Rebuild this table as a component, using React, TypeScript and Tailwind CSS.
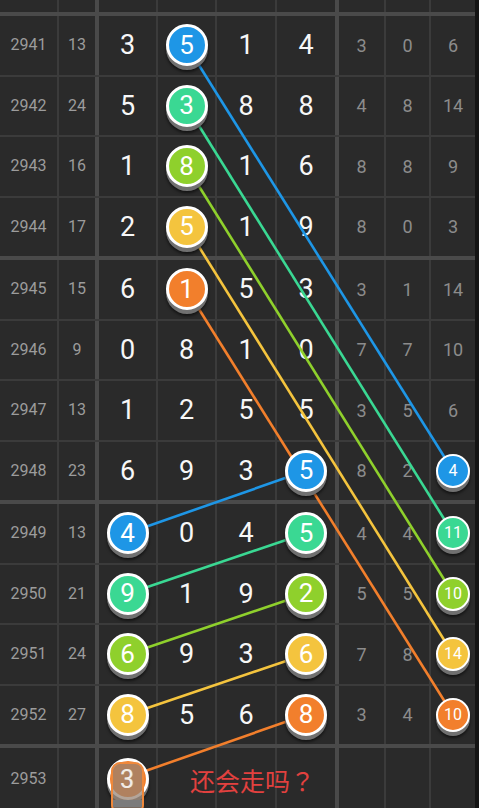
import type { ReactNode } from "react";

type Color = "blue" | "green" | "lime" | "yellow" | "orange";
type Val = number | { n: number; c: Color } | null;

const BALL_BG: Record<Color, string> = {
  blue: "bg-[#1e96e6]",
  green: "bg-[#3ad893]",
  lime: "bg-[#8fd02c]",
  yellow: "bg-[#f4c43e]",
  orange: "bg-[#f27f2c]",
};

const LINE: Record<Color, string> = {
  blue: "#1e96e6",
  green: "#3ad893",
  lime: "#8fd02c",
  yellow: "#f4c43e",
  orange: "#f27f2c",
};

const ROWS: { issue: number; sum: number | null; main: Val[]; skip: Val[] }[] = [
  { issue: 2941, sum: 13, main: [3, { n: 5, c: "blue" }, 1, 4], skip: [3, 0, 6] },
  { issue: 2942, sum: 24, main: [5, { n: 3, c: "green" }, 8, 8], skip: [4, 8, 14] },
  { issue: 2943, sum: 16, main: [1, { n: 8, c: "lime" }, 1, 6], skip: [8, 8, 9] },
  { issue: 2944, sum: 17, main: [2, { n: 5, c: "yellow" }, 1, 9], skip: [8, 0, 3] },
  { issue: 2945, sum: 15, main: [6, { n: 1, c: "orange" }, 5, 3], skip: [3, 1, 14] },
  { issue: 2946, sum: 9, main: [0, 8, 1, 0], skip: [7, 7, 10] },
  { issue: 2947, sum: 13, main: [1, 2, 5, 5], skip: [3, 5, 6] },
  { issue: 2948, sum: 23, main: [6, 9, 3, { n: 5, c: "blue" }], skip: [8, 2, { n: 4, c: "blue" }] },
  { issue: 2949, sum: 13, main: [{ n: 4, c: "blue" }, 0, 4, { n: 5, c: "green" }], skip: [4, 4, { n: 11, c: "green" }] },
  { issue: 2950, sum: 21, main: [{ n: 9, c: "green" }, 1, 9, { n: 2, c: "lime" }], skip: [5, 5, { n: 10, c: "lime" }] },
  { issue: 2951, sum: 24, main: [{ n: 6, c: "lime" }, 9, 3, { n: 6, c: "yellow" }], skip: [7, 8, { n: 14, c: "yellow" }] },
  { issue: 2952, sum: 27, main: [{ n: 8, c: "yellow" }, 5, 6, { n: 8, c: "orange" }], skip: [3, 4, { n: 10, c: "orange" }] },
];

// geometry shared with the svg overlay
const MAIN_X = [127.5, 186.5, 246, 306];
const SKIP_X = 453;
const rowY = (i: number) => 16 + Math.floor(i / 4) * 244 + (i % 4) * 60.5 + 29.25;

const SEGMENTS: { c: Color; from: [number, number]; to: [number, number] }[] = [
  { c: "blue", from: [MAIN_X[1], rowY(0)], to: [SKIP_X, rowY(7)] },
  { c: "green", from: [MAIN_X[1], rowY(1)], to: [SKIP_X, rowY(8)] },
  { c: "lime", from: [MAIN_X[1], rowY(2)], to: [SKIP_X, rowY(9)] },
  { c: "yellow", from: [MAIN_X[1], rowY(3)], to: [SKIP_X, rowY(10)] },
  { c: "orange", from: [MAIN_X[1], rowY(4)], to: [SKIP_X, rowY(11)] },
  { c: "blue", from: [MAIN_X[3], rowY(7)], to: [MAIN_X[0], rowY(8)] },
  { c: "green", from: [MAIN_X[3], rowY(8)], to: [MAIN_X[0], rowY(9)] },
  { c: "lime", from: [MAIN_X[3], rowY(9)], to: [MAIN_X[0], rowY(10)] },
  { c: "yellow", from: [MAIN_X[3], rowY(10)], to: [MAIN_X[0], rowY(11)] },
  { c: "orange", from: [MAIN_X[3], rowY(11)], to: [MAIN_X[0], rowY(12)] },
];

function Ball({ n, c, small }: { n: number; c: Color; small?: boolean }) {
  return (
    <div
      className={`relative z-20 flex items-center justify-center rounded-full border-white text-white shadow-[0_4px_0_#707070,0_6px_3px_rgba(0,0,0,0.55)] ${BALL_BG[c]} ${
        small ? "w-[34px] h-[34px] border-[2.5px] text-[16px]" : "w-[42px] h-[42px] border-[3px] text-[26px]"
      }`}
    >
      {n}
    </div>
  );
}

function Cell({ w, children, className = "" }: { w: string; children?: ReactNode; className?: string }) {
  return <div className={`${w} shrink-0 flex items-center justify-center ${className}`}>{children}</div>;
}

const Thin = () => <div className="w-[2px] shrink-0 bg-[#3b3b3b]" />;
const Thick = () => <div className="w-[4px] shrink-0 bg-[#4a4a4a]" />;

const MAIN_W = ["w-[57px]", "w-[57px]", "w-[58px]", "w-[58px]"];
const SKIP_W = ["w-[45px]", "w-[43px]", "w-[44px]"];

function GridRow({
  h,
  issue,
  sum,
  main,
  skip,
  mainSlot,
}: {
  h: string;
  issue?: ReactNode;
  sum?: ReactNode;
  main: ReactNode[];
  skip: ReactNode[];
  mainSlot?: boolean;
}) {
  return (
    <div className={`flex ${h}`}>
      <Cell w="w-[57px]" className="text-[16px] text-[#9c9c9c]">
        {issue}
      </Cell>
      <Thin />
      <Cell w="w-[36px]" className="text-[16px] text-[#9c9c9c]">
        {sum}
      </Cell>
      <Thick />
      {main.map((m, i) => (
        <div key={i} className="flex">
          {i > 0 && <Thin />}
          <Cell w={MAIN_W[i]} className={`text-[27px] text-[#f7f7f7] ${mainSlot && i === 1 ? "justify-start" : ""}`}>
            {m}
          </Cell>
        </div>
      ))}
      <Thick />
      {skip.map((s, i) => (
        <div key={i} className="flex">
          {i > 0 && <Thin />}
          <Cell w={SKIP_W[i]} className="text-[18px] text-[#8c8c8c]">
            {s}
          </Cell>
        </div>
      ))}
    </div>
  );
}

function renderVal(v: Val, small?: boolean) {
  if (v === null) return null;
  if (typeof v === "number") return v;
  return <Ball n={v.n} c={v.c} small={small} />;
}

export default function App() {
  return (
    <div className="w-[479px] h-[808px] overflow-hidden bg-[#141414] font-['Roboto','Noto_Sans_CJK_SC',sans-serif]">
      <div className="relative w-[475px] bg-[#2a2a2a]">
        <GridRow h="h-[12px]" main={[null, null, null, null]} skip={[null, null, null]} />
        <div className="h-[4px] bg-[#4a4a4a]" />
        {ROWS.map((r, i) => (
          <div key={r.issue}>
            <GridRow
              h="h-[58.5px]"
              issue={r.issue}
              sum={r.sum}
              main={r.main.map((v) => renderVal(v))}
              skip={r.skip.map((v) => renderVal(v, true))}
            />
            <div className={i % 4 === 3 ? "h-[4px] bg-[#4a4a4a]" : "h-[2px] bg-[#3b3b3b]"} />
          </div>
        ))}
        <GridRow
          h="h-[62px]"
          issue={2953}
          mainSlot
          main={[
            <div key="b" className="relative">
              <Ball n={3} c="orange" />
              <div className="absolute z-30 left-[4px] top-[4px] w-[33px] h-[52px] rounded-[9px] border-2 border-[#f0883a] bg-[rgba(150,130,115,0.72)] flex flex-col items-center overflow-hidden">
                <span className="text-[25px] leading-[31px] text-[#f3ece6]">3</span>
                <div className="mt-[5px] w-full h-[7px] bg-[#7b7b7b]" />
              </div>
            </div>,
            <span
              key="t"
              className="relative z-20 whitespace-nowrap pl-[32px] pt-[4px] text-[25px] text-[#e2413f] font-['Noto_Sans_CJK_SC',sans-serif]"
            >
              还会走吗<span className="font-['Noto_Sans_CJK_TC',sans-serif]">？</span>
            </span>,
            null,
            null,
          ]}
          skip={[null, null, null]}
        />
        <svg className="absolute left-0 top-0 z-10 pointer-events-none" width={475} height={808}>
          {SEGMENTS.map((s, i) => (
            <line
              key={i}
              x1={s.from[0]}
              y1={s.from[1]}
              x2={s.to[0]}
              y2={s.to[1]}
              stroke={LINE[s.c]}
              strokeWidth={2.6}
            />
          ))}
        </svg>
      </div>
    </div>
  );
}
